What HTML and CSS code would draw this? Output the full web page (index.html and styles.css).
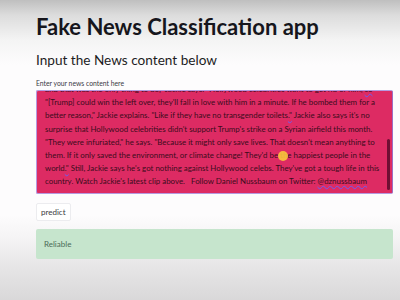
FILE: index.html
```html
<!DOCTYPE html>
<html lang="en">
<head>
  <meta charset="UTF-8" />
  <meta name="viewport" content="width=device-width, initial-scale=1" />
  <title>Fake News Classification app</title>
  <link rel="stylesheet" href="styles.css">
</head>
<body>
  <div class="container">
    <h1>Fake News Classification app</h1>
    <h2>Input the News content below</h2>

    <label class="field-label">Enter your news content here</label>
    <div class="textbox">
      <div class="textbox-text">
        <p>and that was the only thing to do," Jackie says. "Hollywood celebrities want to get rid of him, <span class="spell">so</span></p>
        <p>"[Trump] could win the left over, they'll fall in love with him in a minute. If he bombed them for a</p>
        <p>better reason," Jackie explains. "Like if they have no transgender toilets<span class="spell">."</span> Jackie also says it's no</p>
        <p>surprise that Hollywood celebrities didn't support Trump's strike on a Syrian airfield this month.</p>
        <p>"They were infuriated," he says. "Because it might only save lives. That doesn't mean anything to</p>
        <p>them. If it only saved the environment, or climate change! They'd be the happiest people in the</p>
        <p>world<span class="spell">."</span> Still, Jackie says he's got nothing against Hollywood celebs. They've got a tough life in this</p>
        <p>country. Watch Jackie's latest clip above.&nbsp;&nbsp;&nbsp;Follow Daniel Nussbaum on Twitter: <span class="spell">@dznussbaum</span></p>
      </div>
      <div class="scrollbar"></div>
      <div class="cursor-dot"></div>
    </div>

    <button class="btn">predict</button>

    <div class="alert-success">Reliable</div>
  </div>
</body>
</html>
```

FILE: styles.css
```css
body {
  margin: 0;
  font-family: Lato, "Open Sans", sans-serif;
  color: #262730;
  background: linear-gradient(to bottom, #bfbfbf 0, #dcdcdc 15px, #f4f4f4 40px, #fdfcfd 65px, #fdfcfd 215px, #f4f3f4 240px, #e6e5e6 268px, #d9d8d9 300px);
  height: 300px;
  overflow: hidden;
}
.container {
  padding: 14px 7px 0 36px;
}
h1 {
  font-size: 22px;
  font-weight: 700;
  margin: 0;
  line-height: 26px;
  color: #16161c;
}
h2 {
  font-size: 13.6px;
  font-weight: 400;
  margin: 11px 0 0;
  line-height: 18px;
  color: #1d1d24;
}
.field-label {
  display: block;
  font-size: 6.8px;
  margin-top: 9px;
  line-height: 10px;
  color: #3a3a44;
}
.textbox {
  position: relative;
  margin-top: 2px;
  height: 102px;
  background: #dd2b63;
  border: 1px solid #b59ae0;
  border-right-color: #9a6fc4;
  border-radius: 2px;
  overflow: hidden;
}
.textbox-text {
  margin-top: -8px;
  padding: 0 8px;
  font-size: 7.9px;
  line-height: 13.2px;
  color: #3b0c1c;
  white-space: nowrap;
}
.textbox-text p {
  margin: 0;
}
.spell {
  text-decoration: underline wavy #6b5cf0;
  text-decoration-thickness: 1px;
}
.scrollbar {
  position: absolute;
  right: 2px;
  top: 48px;
  bottom: 3px;
  width: 3px;
  border-radius: 2px;
  background: #6e0f33;
}
.cursor-dot {
  position: absolute;
  left: 241px;
  top: 60px;
  width: 10px;
  height: 10px;
  border-radius: 50%;
  background: rgba(250, 200, 60, 0.9);
}
.btn {
  display: block;
  margin-top: 9px;
  padding: 0 4px;
  height: 18px;
  font-family: Lato, "Open Sans", sans-serif;
  font-size: 8px;
  color: #3a3a40;
  background: #fff;
  border: 1px solid #ececef;
  border-radius: 2px;
}
.alert-success {
  margin-top: 8px;
  height: 30px;
  line-height: 30px;
  padding-left: 8px;
  font-size: 8px;
  color: #4b6b57;
  background: #c6e5cd;
  border-radius: 2px;
}
```
